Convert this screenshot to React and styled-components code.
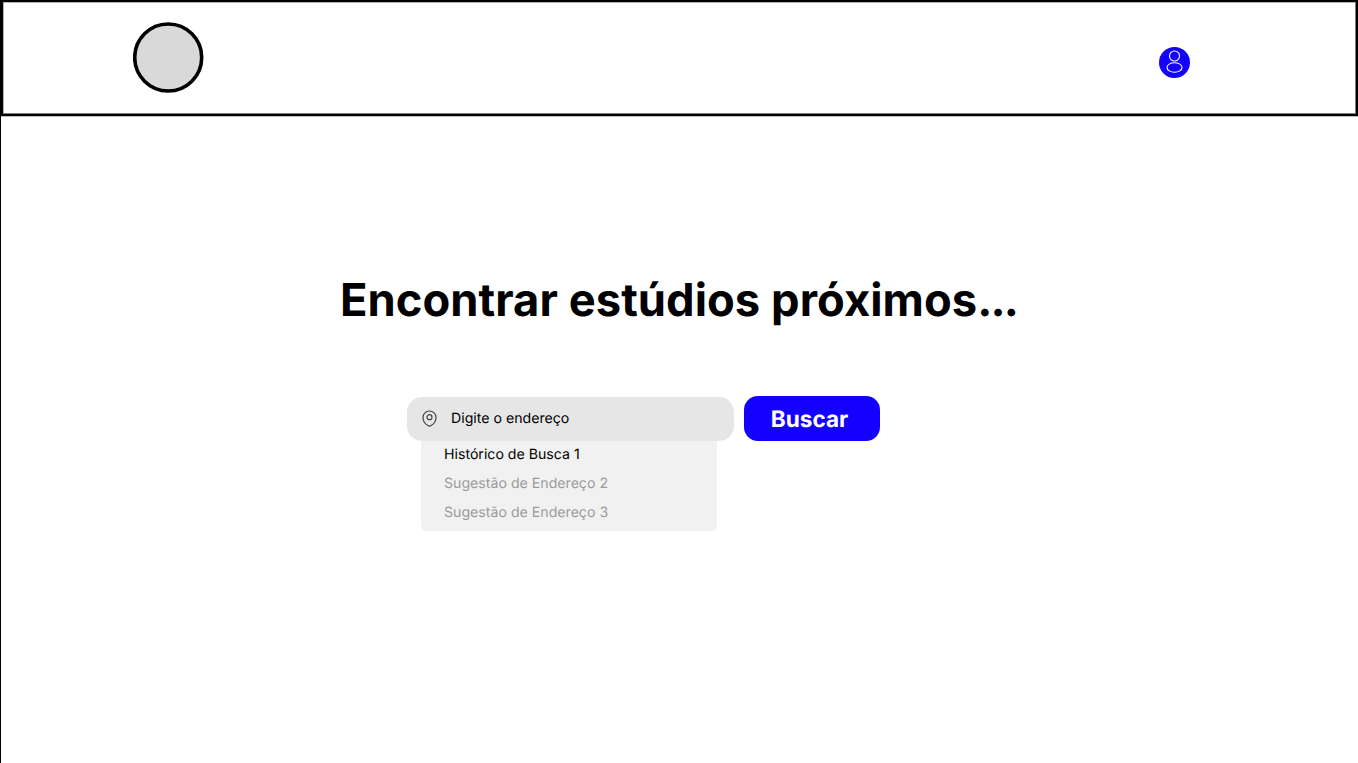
import React from "react";
import styled, { createGlobalStyle } from "styled-components";

const GlobalStyle = createGlobalStyle`
  * { box-sizing: border-box; }
  body {
    margin: 0;
    background: #fff;
    color: #000;
    font-family: Inter, "Liberation Sans", sans-serif;
    text-rendering: geometricPrecision;
  }
`;

const Page = styled.div`
  min-height: 100vh;
  overflow: hidden;
  box-shadow: inset 1px 0 0 #000;
`;

const Header = styled.header`
  display: flex;
  justify-content: space-between;
  align-items: flex-start;
  height: 116px;
  padding: 20px 166px 0 130px;
  border: solid #000;
  border-width: 2px 2px 2px 3px;
  background: #fff;
  box-shadow: inset 0 -1px 0 #7c7c7c, inset -1px 0 0 #7c7c7c,
    inset 1px 1px 0 #b4b4b4, 1px 1px 0 #bdbdbd;
`;

const Logo = styled.svg`
  display: block;
  width: 71px;
  height: 71px;
`;

const Avatar = styled.svg`
  display: block;
  width: 32px;
  height: 32px;
  margin-top: 24px;
`;

const Main = styled.main`
  display: flex;
  flex-direction: column;
  align-items: flex-start;
`;

const Title = styled.h1`
  margin: 156px 0 0 340px;
  font-size: 45.3px;
  line-height: 56px;
  font-weight: 700;
  letter-spacing: 0.05px;
  white-space: nowrap;
`;

const Ellipsis = styled.span`
  letter-spacing: -1.85px;
`;

const Search = styled.form`
  display: flex;
  align-items: flex-start;
  gap: 10px;
  margin: 68px 0 0 407px;
`;

const Lookup = styled.div`
  display: flex;
  flex-direction: column;
  width: 327px;
  padding-top: 1px;
`;

const Field = styled.label`
  display: flex;
  align-items: center;
  gap: 14px;
  height: 44px;
  padding: 0 0 1px 15px;
  border-radius: 15px;
  background: #e6e6e6;
  font-size: 14.15px;
  line-height: 21px;
`;

const Pin = styled.svg`
  display: block;
  width: 15px;
  height: 17px;
`;

const Suggestions = styled.ul`
  display: flex;
  flex-direction: column;
  width: 296px;
  height: 90px;
  margin: 0 0 0 14px;
  padding: 0 0 0 23px;
  border-radius: 0 0 5px 5px;
  background: #f1f1f1;
  list-style: none;
`;

const Suggestion = styled.li`
  height: 29px;
  font-size: 14.15px;
  line-height: 27px;
  color: ${({ $muted }) => ($muted ? "#9b9b9b" : "#000")};
`;

const SearchButton = styled.button`
  width: 136px;
  height: 45px;
  padding: 2px 5px 0 0;
  border: 0;
  border-radius: 14px;
  background: #1400ff;
  color: #fff;
  font: 700 22.6px/28px Inter, "Liberation Sans", sans-serif;
  text-rendering: geometricPrecision;
`;

const items = [
  { text: "Histórico de Busca 1", muted: false },
  { text: "Sugestão de Endereço 2", muted: true },
  { text: "Sugestão de Endereço 3", muted: true },
];

export default function App() {
  return (
    <Page>
      <GlobalStyle />
      <Header>
        <Logo viewBox="0 0 71 71">
          <circle cx="35.2" cy="35.5" r="33.5" fill="#d9d9d9" stroke="#000" strokeWidth="3.6" />
        </Logo>
        <Avatar viewBox="0 0 32 32">
          <circle cx="16.5" cy="16.5" r="15.5" fill="#1400ff" />
          <g fill="none" stroke="#fff" strokeWidth="1.1">
            <circle cx="16.5" cy="10" r="5" />
            <ellipse cx="16.5" cy="21.5" rx="7.5" ry="4.8" />
          </g>
        </Avatar>
      </Header>
      <Main>
        <Title>
          Encontrar estúdios próximos<Ellipsis>...</Ellipsis>
        </Title>
        <Search onSubmit={(e) => e.preventDefault()}>
          <Lookup>
            <Field>
              <Pin viewBox="0 0 15 17" fill="none" stroke="#444" strokeWidth="1.2">
                <path d="M7.5 1C3.900 1 1 3.900 1 7.400c0 3.500 2.100 6.500 4.900 8.200a3 3 0 0 0 3.200 0c2.800-1.700 4.900-4.700 4.900-8.200C14 3.900 11.100 1 7.500 1Z" />
                <circle cx="7.500" cy="7.200" r="2.500" />
              </Pin>
              <span>Digite o endereço</span>
            </Field>
            <Suggestions>
              {items.map((item) => (
                <Suggestion key={item.text} $muted={item.muted}>
                  {item.text}
                </Suggestion>
              ))}
            </Suggestions>
          </Lookup>
          <SearchButton>Buscar</SearchButton>
        </Search>
      </Main>
    </Page>
  );
}
